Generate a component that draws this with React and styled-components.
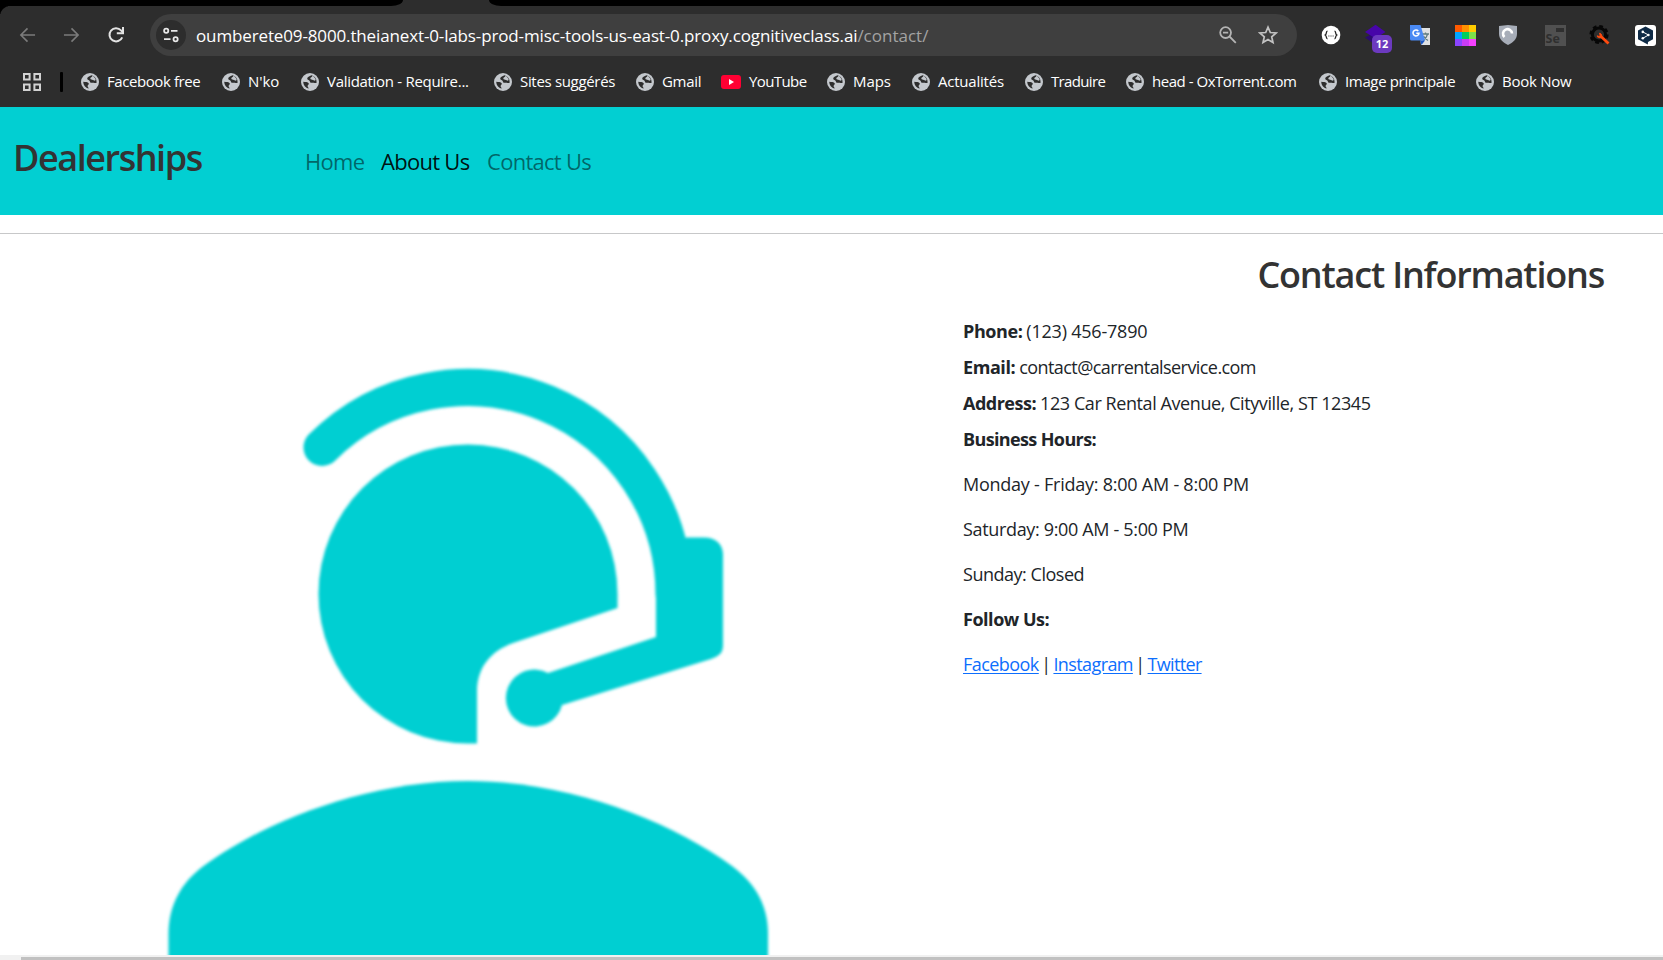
import React from "react";
import styled, { createGlobalStyle } from "styled-components";

const Global = createGlobalStyle`
  *, *::before, *::after { box-sizing: border-box; }
  body { margin: 0; background: #fff; overflow: hidden; font-family: "Open Sans", "Noto Sans", sans-serif; }
  ul, h1, h2, p { margin: 0; padding: 0; }
  svg { display: block; flex: none; }
`;

const Screen = styled.div`
  width: 1663px;
  height: 960px;
  display: flex;
  flex-direction: column;
  overflow: hidden;
`;

/* Browser chrome */
const Chrome = styled.header`
  flex: none;
  height: 107px;
  background: #2d2d2d;
`;
const TabStrip = styled.div`
  display: flex;
  justify-content: space-between;
  height: 6px;
`;
const TabGap = styled.div`
  width: ${(p) => p.$width}px;
  background: #000;
  border-radius: ${(p) => (p.$left ? "0 0 12px 0 / 0 0 6px 0" : "0 0 0 12px / 0 0 0 6px")};
`;
const Toolbar = styled.div`
  display: flex;
  align-items: center;
  height: 58px;
  padding-left: 19px;
  background: linear-gradient(#000, #000) 0 0 / 8px 8px no-repeat;
  position: relative;
  &::before {
    content: "";
    position: absolute;
    inset: 0;
    border-radius: 10px 0 0 0;
    background: #2d2d2d;
  }
  & > * { position: relative; }
`;
const NavButtons = styled.div`
  display: flex;
  gap: 27px;
  width: 131px;
`;
const AddressBar = styled.div`
  display: flex;
  align-items: center;
  width: 1147px;
  height: 42px;
  padding: 0 19px 0 6px;
  border-radius: 21px;
  background: #3f3f3f;
`;
const SiteInfo = styled.div`
  display: grid;
  place-items: center;
  width: 30px;
  height: 30px;
  margin-right: 10px;
  border-radius: 50%;
  background: #2d2d2d;
`;
const Url = styled.div`
  flex: 1;
  padding-top: 1px;
  font-size: 17px;
  line-height: 24px;
  letter-spacing: -0.135px;
  color: #fff;
  white-space: nowrap;
`;
const UrlPath = styled.span`
  color: #a3a3a3;
  letter-spacing: 0;
`;
const BarActions = styled.div`
  display: flex;
  gap: 20px;
`;
const Extensions = styled.div`
  display: flex;
  align-items: center;
  margin-left: 22px;
`;
const Extension = styled.div`
  position: relative;
  display: grid;
  place-items: center;
  width: 24px;
  height: 24px;
  margin-right: ${(p) => p.$gap ?? 21}px;
`;
const Badge = styled.span`
  position: absolute;
  left: 8px;
  top: 12px;
  width: 20px;
  height: 18px;
  border-radius: 5px;
  background: #6c3abf;
  color: #fff;
  font-size: 11px;
  font-weight: 700;
  line-height: 18px;
  text-align: center;
`;
const BookmarksBar = styled.div`
  display: flex;
  align-items: center;
  height: 36px;
  padding-left: 22px;
`;
const Divider = styled.div`
  width: 3px;
  height: 20px;
  margin: 0 18px 0 18px;
  border-radius: 1px;
  background: #000;
`;
const BookmarkItem = styled.a`
  flex: none;
  display: flex;
  align-items: center;
  gap: 8px;
  width: ${(p) => p.$width}px;
  font-size: 15px;
  line-height: 20px;
  letter-spacing: ${(p) => p.$track}px;
  color: #fff;
  white-space: nowrap;
`;
const BookmarkName = styled.span`
  padding-bottom: 2px;
`;

/* Page */
const SiteNav = styled.nav`
  flex: none;
  display: flex;
  align-items: flex-start;
  height: 108px;
  padding-left: 13px;
  background: #02cfd2;
`;
const Brand = styled.h1`
  width: 292px;
  padding-top: 29px;
  font-size: 36px;
  font-weight: 600;
  line-height: 44px;
  letter-spacing: -1.45px;
  color: #333;
`;
const NavLinks = styled.div`
  display: flex;
  padding-top: 38px;
`;
const NavLink = styled.a`
  width: ${(p) => p.$width}px;
  font-size: 22px;
  line-height: 33px;
  letter-spacing: -0.72px;
  white-space: nowrap;
  color: ${(p) => (p.$active ? "rgba(0,0,0,.92)" : "rgba(0,0,0,.52)")};
`;
const Rule = styled.div`
  flex: none;
  height: 1px;
  margin-top: 18px;
  background: #c7c8c9;
`;
const Content = styled.main`
  flex: 1;
  min-height: 0;
  display: grid;
  grid-template-columns: 963px 1fr;
  overflow: hidden;
`;
const Illustration = styled.div`
  overflow: hidden;
`;
const Info = styled.section`
  padding: 19px 59px 0 0;
  color: #212529;
  font-size: 18px;
  line-height: 27px;
`;
const Heading = styled.h2`
  margin-bottom: 21px;
  font-size: 36px;
  font-weight: 600;
  line-height: 44px;
  letter-spacing: -1.2px;
  text-align: right;
  color: #333;
`;
const Line = styled.p`
  display: flex;
  gap: ${(p) => (p.$tight ? 2.4 : 4)}px;
  margin-bottom: ${(p) => (p.$loose ? 18 : 9)}px;
  white-space: nowrap;
`;
const Label = styled.strong`
  font-weight: 700;
  letter-spacing: ${(p) => p.$track}px;
`;
const Value = styled.span`
  letter-spacing: ${(p) => p.$track}px;
`;
const SocialLink = styled.a`
  letter-spacing: ${(p) => p.$track}px;
  color: #0d6efd;
  text-decoration: underline;
  text-underline-offset: 2px;
`;
const ScrollTrack = styled.div`
  flex: none;
  height: 5px;
  padding: 2px 0 0 21px;
  background: #f1f1f1;
`;
const ScrollThumb = styled.div`
  height: 3px;
  background: #c1c1c1;
`;

const Arrow = ({ flip }) => (
  <svg width="17" height="18" viewBox="0 0 18 18" fill="none" stroke="#7b7b7b" strokeWidth="1.7" transform={flip ? "scale(-1 1)" : undefined}>
    <path d="M17 9H2.5M9 2 2 9l7 7" />
  </svg>
);
const Reload = () => (
  <svg width="18" height="18" viewBox="0 0 18 18" fill="none" stroke="#e3e3e3" strokeWidth="2">
    <path d="M15.2 11.3A6.6 6.6 0 1 1 14 4.4L16 6.6" />
    <path d="M16 1v6.3h-6.2" />
  </svg>
);
const Tune = () => (
  <svg width="18" height="18" viewBox="0 0 18 18" fill="none" stroke="#e8e8e8" strokeWidth="1.8">
    <circle cx="4.2" cy="4.8" r="2.1" />
    <path d="M9 4.8h6.5M2 13.2h6.5" />
    <circle cx="13.6" cy="13.2" r="2.1" />
  </svg>
);
const ZoomOut = () => (
  <svg width="20" height="20" viewBox="0 0 20 20" fill="none" stroke="#b4b4b4" strokeWidth="1.8">
    <circle cx="7.6" cy="7.6" r="5.4" />
    <path d="M5 7.6h5.2M11.5 11.5l6.3 6.3" />
  </svg>
);
const Star = () => (
  <svg width="20" height="20" viewBox="0 0 20 20" fill="none" stroke="#c2c2c2" strokeWidth="1.7">
    <path d="m10 2.2 2.3 5.3 5.8.5-4.4 3.8 1.3 5.7-5-3-5 3 1.3-5.7L1.9 8l5.8-.5z" />
  </svg>
);
const Grid = () => (
  <svg width="20" height="20" viewBox="0 0 20 20" fill="none" stroke="#d2d2d2" strokeWidth="2">
    <path d="M2 2h5.6v5.6H2zM12.4 2H18v5.6h-5.6zM2 12.4h5.6V18H2zM12.4 12.4H18V18h-5.6z" />
  </svg>
);
const Globe = () => (
  <svg width="18" height="18" viewBox="0 0 18 18">
    <circle cx="9" cy="9" r="9" fill="#c4c8cd" />
    <path d="M10.5 2.2C8.3 3 6.3 4 6.2 5.7c0 1.6 2.3 1.1 2.7 2.7.2 1.3 1.5 1.5 2.6 1.4 1.6-.2 2.2.4 4 .3.5-3.7-1.2-6.8-5-7.9z" fill="#2d2d2d" />
    <path d="M11.7 2.6c-.4 1.8-2.6 1.7-2.4 3.2.2 1 1.8.6 2.6 1.3l2 .6c.9-.5.9-1.4.4-2.3z" fill="#c4c8cd" />
    <path d="M2.3 8.7c1.9.3 4.7.1 5.4 1.6.5 1.3-1 1.7-1.1 2.8 0 1 .9 1.4 1.1 2.5-3-.5-5.5-3.600-5.400-6.900z" fill="#2d2d2d" />
  </svg>
);
const YouTube = () => (
  <svg width="20" height="18" viewBox="0 0 20 18">
    <rect y="2" width="20" height="14" rx="3" fill="#ff0033" />
    <path d="M8 6v6l5-3z" fill="#fff" />
  </svg>
);

const Braces = () => (
  <svg width="20" height="20" viewBox="0 0 20 20" fill="none" stroke="#222" strokeWidth="1.3">
    <circle cx="10" cy="10" r="9.3" fill="#fff" stroke="none" />
    <path d="M6.500 6.200C4.800 6.200 5.900 9 4.200 10c1.700 1 .6 3.800 2.300 3.800M13.500 6.200c1.700 0 .6 2.800 2.300 3.800-1.700 1-.6 3.800-2.300 3.800" />
    <path d="M7.400 11h1M9.500 11h1M11.600 11h1" strokeWidth="1" />
  </svg>
);
const Layers = () => (
  <svg width="24" height="24" viewBox="0 0 24 24">
    <path d="m1 14.500 10-5 11 5-11 7z" fill="#2c0a70" />
    <path d="M1 9 11.500 1.800 21.500 9l-10 6.600z" fill="#4705a9" />
  </svg>
);
const Translate = () => (
  <svg width="22" height="22" viewBox="0 0 22 22">
    <path d="M10 4h11v17h-9z" fill="#dfe1e3" />
    <path d="M13 10h7M16.500 8.500V10M18.500 10c-.5 3-2.500 5-4.500 6.500M14.500 12c1 2 2.500 3.500 4.500 4.500" stroke="#607d80" strokeWidth="1.3" fill="none" />
    <path d="M1 1h10.500L16 16.500H2.500A1.500 1.500 0 0 1 1 15z" fill="#4a8af4" />
    <path d="M11 16.500h5L12.500 21z" fill="#1a56c4" />
    <path d="M9.300 7A3 3 0 1 0 10 9.200H7.300" stroke="#fff" strokeWidth="1.5" fill="none" />
  </svg>
);
const SWATCHES = ["#ff5a00", "#ff9100", "#ffcc00", "#00a5ff", "#00cf5d", "#7be04b", "#8a44ff", "#c93cf5", "#f641ff"];
const Swatches = () => (
  <svg width="21" height="21" viewBox="0 0 21 21" shapeRendering="crispEdges">
    {SWATCHES.map((c, i) => (
      <rect key={c} x={(i % 3) * 7} y={Math.floor(i / 3) * 7} width="7" height="7" fill={c} />
    ))}
  </svg>
);
const Shield = () => (
  <svg width="20" height="22" viewBox="0 0 20 22">
    <path d="M1 2 10 1l9 1v8c0 5-4 8.500-9 11-5-2.500-9-6-9-11z" fill="#a7adb8" />
    <path d="M6.500 13A4.500 4.500 0 1 1 14 9.500" fill="none" stroke="#fff" strokeWidth="2.6" />
  </svg>
);
const SeleniumBox = styled.div`
  position: relative;
  width: 21px;
  height: 21px;
  padding: 6px 0 0 1px;
  background: #505050;
  color: #2f2f2f;
  font-size: 12.5px;
  font-weight: 700;
  line-height: 15px;
  &::after {
    content: "";
    position: absolute;
    right: 2px;
    top: 3px;
    width: 8px;
    height: 4px;
    background: #2f2f2f;
  }
`;
const Gear = () => (
  <svg width="22" height="22" viewBox="0 0 22 22" fill="none">
    <circle cx="10" cy="10.5" r="7.6" stroke="#070707" strokeWidth="4" strokeDasharray="3.4 2.57" />
    <circle cx="10" cy="10.5" r="6.6" stroke="#070707" strokeWidth="3" />
    <path d="m11.500 12 8 7.500" stroke="#ff4b0f" strokeWidth="2.8" />
    <path d="M8.300 11.800c-.6 1.800 2.700 2.500 4 1.500 1-1.300.2-4-1.800-4l.8 2.200-1.300 1z" fill="#ff4b0f" stroke="#ff4b0f" />
  </svg>
);
const Hexagon = () => (
  <svg width="21" height="21" viewBox="0 0 21 21">
    <rect width="21" height="21" rx="3" fill="#fff" />
    <path d="m10.500 1.500 7.500 4v8.800l-5 2.700-.2 2.500-2.800-1.600-7-3.600V5.500z" fill="#0f2b46" />
    <path d="m8 7 5.500 3L8 13.200" stroke="#fff" strokeWidth="1" fill="none" />
    <circle cx="7.800" cy="6.900" r="1.300" fill="#fff" />
    <circle cx="13.400" cy="10" r="1.300" fill="#fff" />
    <circle cx="7.800" cy="13.200" r="1.300" fill="#fff" />
  </svg>
);

const Agent = () => (
  <svg width="963" height="721" viewBox="0 234 963 721">
    <defs>
      <filter id="soft" x="-5%" y="-5%" width="110%" height="110%">
        <feGaussianBlur stdDeviation="1.6" />
      </filter>
    </defs>
    <g fill="#02cfd2" filter="url(#soft)">
      <path d="M322 447.500A206.500 206.500 0 0 1 674 594" fill="none" stroke="#02cfd2" strokeWidth="37" strokeLinecap="round" />
      <path d="M656 580 686 537.500h18c12 0 19 7 19 17V645c0 8-4 11-12 14L562 705A28.500 28.500 0 1 1 548 673L656 637z" />
      <path d="M617.500 608 513 643c-22 8-36 24-36 49v51.500h-9.500A149.500 149.500 0 1 1 617.500 594z" />
      <path d="M168.500 975V934c0-28 12-51 35-68 62-45 163-85 264.500-85s202 40 264 85c24 18 36 40 36 68v41z" />
    </g>
  </svg>
);

const BOOKMARKS = [
  { name: "Facebook free", width: 141, track: -0.42 },
  { name: "N'ko", width: 79, track: -0.05 },
  { name: "Validation - Require...", width: 193, track: -0.3 },
  { name: "Sites suggérés", width: 142, track: -0.32 },
  { name: "Gmail", width: 85, track: -0.3 },
  { name: "YouTube", width: 106, track: -0.6, icon: YouTube },
  { name: "Maps", width: 85, track: -0.1 },
  { name: "Actualités", width: 113, track: -0.22 },
  { name: "Traduire", width: 101, track: -0.65 },
  { name: "head - OxTorrent.com", width: 193, track: -0.47 },
  { name: "Image principale", width: 157, track: -0.35 },
  { name: "Book Now", width: 110, track: -0.25 },
];

export default function App() {
  return (
    <Screen>
      <Global />
      <Chrome>
        <TabStrip>
          <TabGap $width={403} $left />
          <TabGap $width={1174} />
        </TabStrip>
        <Toolbar>
          <NavButtons>
            <Arrow />
            <Arrow flip />
            <Reload />
          </NavButtons>
          <AddressBar>
            <SiteInfo><Tune /></SiteInfo>
            <Url>
              oumberete09-8000.theianext-0-labs-prod-misc-tools-us-east-0.proxy.cognitiveclass.ai
              <UrlPath>/contact/</UrlPath>
            </Url>
            <BarActions>
              <ZoomOut />
              <Star />
            </BarActions>
          </AddressBar>
          <Extensions>
            <Extension><Braces /></Extension>
            <Extension $gap={20}><Layers /><Badge>12</Badge></Extension>
            <Extension><Translate /></Extension>
            <Extension $gap={19}><Swatches /></Extension>
            <Extension $gap={23}><Shield /></Extension>
            <Extension><SeleniumBox>Se</SeleniumBox></Extension>
            <Extension><Gear /></Extension>
            <Extension $gap={0}><Hexagon /></Extension>
          </Extensions>
        </Toolbar>
        <BookmarksBar>
          <Grid />
          <Divider />
          {BOOKMARKS.map(({ name, width, track, icon: Icon = Globe }) => (
            <BookmarkItem key={name} $width={width} $track={track}>
              <Icon />
              <BookmarkName>{name}</BookmarkName>
            </BookmarkItem>
          ))}
        </BookmarksBar>
      </Chrome>

      <SiteNav>
        <Brand>Dealerships</Brand>
        <NavLinks>
          <NavLink $width={76}>Home</NavLink>
          <NavLink $width={106} $active>About Us</NavLink>
          <NavLink $width={110}>Contact Us</NavLink>
        </NavLinks>
      </SiteNav>
      <Rule />
      <Content>
        <Illustration><Agent /></Illustration>
        <Info>
          <Heading>Contact Informations</Heading>
          <Line><Label $track={-0.42}>Phone:</Label><Value $track={-0.22}>(123) 456-7890</Value></Line>
          <Line><Label $track={-0.42}>Email:</Label><Value $track={-0.57}>contact@carrentalservice.com</Value></Line>
          <Line><Label $track={-0.5}>Address:</Label><Value $track={-0.42}>123 Car Rental Avenue, Cityville, ST 12345</Value></Line>
          <Line $loose><Label $track={-0.63}>Business Hours:</Label></Line>
          <Line $loose><Value $track={-0.24}>Monday - Friday: 8:00 AM - 8:00 PM</Value></Line>
          <Line $loose><Value $track={-0.34}>Saturday: 9:00 AM - 5:00 PM</Value></Line>
          <Line $loose><Value $track={-0.48}>Sunday: Closed</Value></Line>
          <Line $loose><Label $track={-0.47}>Follow Us:</Label></Line>
          <Line $tight>
            <SocialLink $track={-0.55}>Facebook</SocialLink>
            <span>|</span>
            <SocialLink $track={-0.6}>Instagram</SocialLink>
            <span>|</span>
            <SocialLink $track={-0.67}>Twitter</SocialLink>
          </Line>
        </Info>
      </Content>
      <ScrollTrack><ScrollThumb /></ScrollTrack>
    </Screen>
  );
}
